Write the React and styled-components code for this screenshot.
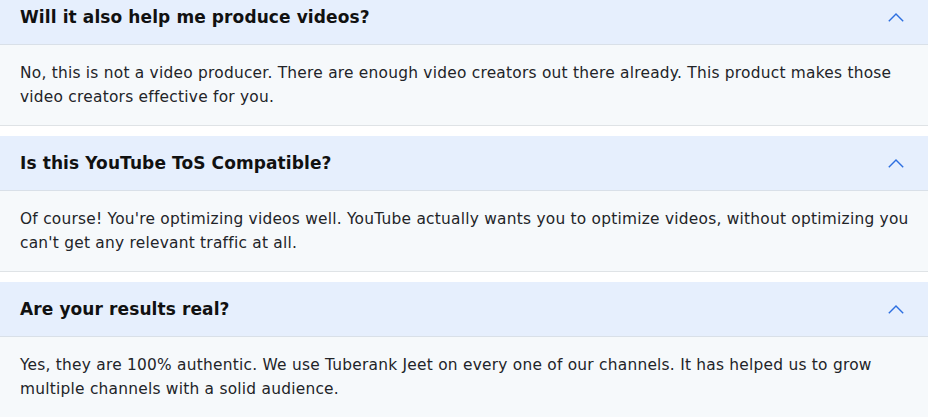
import React from 'react'
import styled, { createGlobalStyle } from 'styled-components'

const GlobalStyle = createGlobalStyle`
  html, body {
    margin: 0;
    padding: 0;
    background: #ffffff;
    overflow: hidden;
  }
  body {
    font-family: 'DejaVu Sans', 'Noto Sans', sans-serif;
  }
`

const faqs = [
  {
    q: 'Will it also help me produce videos?',
    a: 'No, this is not a video producer. There are enough video creators out there already. This product makes those video creators effective for you.',
  },
  {
    q: 'Is this YouTube ToS Compatible?',
    a: "Of course! You're optimizing videos well. YouTube actually wants you to optimize videos, without optimizing you can't get any relevant traffic at all.",
  },
  {
    q: 'Are your results real?',
    a: 'Yes, they are 100% authentic. We use Tuberank Jeet on every one of our channels. It has helped us to grow multiple channels with a solid audience.',
  },
]

const FaqList = styled.div`
  display: flex;
  flex-direction: column;
  gap: 10px;
  margin-top: -10px;
`

const FaqItem = styled.div`
  border-bottom: 1px solid #dfe3e6;
`

const FaqHeader = styled.div`
  height: 55px;
  display: flex;
  align-items: center;
  justify-content: space-between;
  padding: 0 24px 0 20px;
  background: #e6effd;
  border-bottom: 1px solid #d9e0e8;
  box-sizing: border-box;
`

const FaqQuestion = styled.h3`
  margin: 0;
  font-size: 17px;
  font-weight: 700;
  color: #111111;
  letter-spacing: 0.1px;
`

const FaqBody = styled.div`
  background: #f6f9fb;
  padding: 16px 8px 16px 20px;
  font-size: 15.4px;
  letter-spacing: 0.24px;
  line-height: 24px;
  color: #222428;
  height: 80px;
  box-sizing: border-box;
`

const Chevron = () => (
  <svg width="16" height="9" viewBox="0 0 16 9" fill="none">
    <polyline points="0.8,8.2 8,1 15.2,8.2" stroke="#2d6fe0" strokeWidth="1.4" />
  </svg>
)

export default function App() {
  return (
    <>
      <GlobalStyle />
      <FaqList>
        {faqs.map((f) => (
          <FaqItem key={f.q}>
            <FaqHeader>
              <FaqQuestion>{f.q}</FaqQuestion>
              <Chevron />
            </FaqHeader>
            <FaqBody>{f.a}</FaqBody>
          </FaqItem>
        ))}
      </FaqList>
    </>
  )
}
